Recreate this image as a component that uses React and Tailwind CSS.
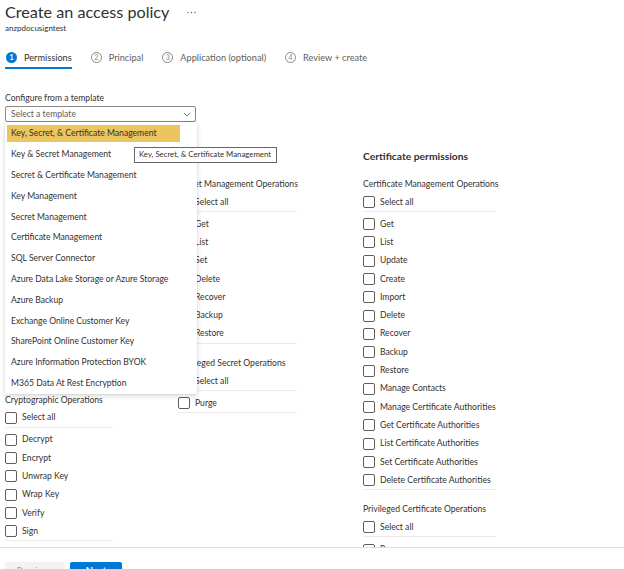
import React from "react";

const keyMgmt = ["Get", "List", "Update", "Create", "Import", "Delete", "Recover", "Backup", "Restore"];
const cryptoOps = ["Decrypt", "Encrypt", "Unwrap Key", "Wrap Key", "Verify", "Sign"];
const privKey = ["Purge", "Release"];
const secretMgmt = ["Get", "List", "Set", "Delete", "Recover", "Backup", "Restore"];
const privSecret = ["Purge"];
const certMgmt = [
  "Get", "List", "Update", "Create", "Import", "Delete", "Recover", "Backup", "Restore",
  "Manage Contacts", "Manage Certificate Authorities", "Get Certificate Authorities",
  "List Certificate Authorities", "Set Certificate Authorities", "Delete Certificate Authorities",
];
const privCert = ["Purge"];

const templates = [
  "Key, Secret, & Certificate Management",
  "Key & Secret Management",
  "Secret & Certificate Management",
  "Key Management",
  "Secret Management",
  "Certificate Management",
  "SQL Server Connector",
  "Azure Data Lake Storage or Azure Storage",
  "Azure Backup",
  "Exchange Online Customer Key",
  "SharePoint Online Customer Key",
  "Azure Information Protection BYOK",
  "M365 Data At Rest Encryption",
];

function Box() {
  return <span className="w-[12px] h-[12px] shrink-0 rounded-[2px] border border-[#605e5c] bg-white" />;
}

function Row({ label, sel }) {
  return (
    <div className={(sel ? "h-[18px]" : "h-[18.3px]") + " flex items-center gap-[5px] whitespace-nowrap"}>
      <Box />
      <span>{label}</span>
    </div>
  );
}

function Section({ label, items, first }) {
  return (
    <div className={first ? "mt-[15px]" : "mt-[13px]"}>
      <div className="h-[12px] leading-[12px] whitespace-nowrap">{label}</div>
      <div className="mt-[3px] border-b border-[#edebe9]">
        <Row label="Select all" sel />
      </div>
      <div className="pt-[3px] border-b border-[#edebe9]">
        {items.map((it) => (
          <Row key={it} label={it} />
        ))}
      </div>
    </div>
  );
}

function Column({ title, width, sections, className }) {
  return (
    <div className={width + " shrink-0 " + (className || "")}>
      <div className="h-[14px] leading-[14px] text-[10.3px] font-bold whitespace-nowrap">{title}</div>
      {sections.map((s, i) => (
        <Section key={s.label} label={s.label} items={s.items} first={i === 0} />
      ))}
    </div>
  );
}

function Step({ n, label, active }) {
  return (
    <div
      className={
        "flex items-center gap-[7px] h-[21px] pl-[1px] " +
        (active ? "border-b-2 border-[#0078d4]" : "border-b-2 border-transparent")
      }
    >
      <span
        className={
          "w-[11px] h-[11px] rounded-full flex items-center justify-center text-[7px] leading-none " +
          (active ? "bg-[#0078d4] text-white font-bold" : "border border-[#8a8886] text-[#8a8886]")
        }
      >
        {n}
      </span>
      <span className={"text-[9.2px] " + (active ? "text-[#323130]" : "text-[#605e5c]")}>{label}</span>
    </div>
  );
}

export default function App() {
  return (
    <div className="w-full h-[569px] overflow-hidden flex flex-col bg-white text-[#323130] text-[8.6px] font-[family-name:Lato,'Open_Sans',sans-serif]">
      <div className="relative flex-1 overflow-hidden px-[5px]">
        <div className="mt-[2px] h-[20px] flex items-center gap-[18px]">
          <span className="text-[16.2px] leading-[20px] font-normal text-[#323130] whitespace-nowrap">
            Create an access policy
          </span>
          <svg width="9" height="3" viewBox="0 0 9 3" className="mt-[1px]">
            <circle cx="1" cy="1.5" r="0.7" fill="#605e5c" />
            <circle cx="4.5" cy="1.5" r="0.7" fill="#605e5c" />
            <circle cx="8" cy="1.5" r="0.7" fill="#605e5c" />
          </svg>
        </div>
        <div className="h-[12px] leading-[12px] text-[8px] text-[#323130]">anzpdocusigntest</div>

        <div className="mt-[14px] flex items-start gap-[18px]">
          <Step n="1" label="Permissions" active />
          <Step n="2" label="Principal" />
          <Step n="3" label="Application (optional)" />
          <Step n="4" label="Review + create" />
        </div>

        <div className="mt-[23px] h-[12px] leading-[12px]">Configure from a template</div>
        <div className="relative mt-[2px] w-[191px]">
          <div className="h-[16px] border border-[#8a8886] rounded-[2px] flex items-center justify-between pl-[5px] pr-[4px]">
            <span className="text-[#605e5c]">Select a template</span>
            <svg width="8" height="5" viewBox="0 0 8 5">
              <path d="M0.8 0.8 L4 4 L7.2 0.8" fill="none" stroke="#605e5c" strokeWidth="0.8" />
            </svg>
          </div>
          <div className="absolute z-10 top-full left-0 w-[192px] bg-white pt-[1.5px] shadow-[0_2px_5px_rgba(0,0,0,0.16),0_0_1px_rgba(0,0,0,0.12)]">
            {templates.map((t, i) => (
              <div key={t} className="h-[20.8px] flex items-center whitespace-nowrap">
                {i === 0 ? (
                  <div className="ml-[2px] w-[173px] h-[17px] bg-[#ebc55f] flex items-center pl-[4px]">{t}</div>
                ) : (
                  <div className="pl-[6px]">{t}</div>
                )}
              </div>
            ))}
          </div>
        </div>

        <div className="mt-[27px] flex">
          <Column
            title="Key permissions"
            width="w-[108px]"
            sections={[
              { label: "Key Management Operations", items: keyMgmt },
              { label: "Cryptographic Operations", items: cryptoOps },
              { label: "Privileged Key Operations", items: privKey },
            ]}
          />
          <Column
            title="Secret permissions"
            width="w-[119px]"
            className="ml-[65px]"
            sections={[
              { label: "Secret Management Operations", items: secretMgmt },
              { label: "Privileged Secret Operations", items: privSecret },
            ]}
          />
          <Column
            title="Certificate permissions"
            width="w-[133px]"
            className="ml-[66px]"
            sections={[
              { label: "Certificate Management Operations", items: certMgmt },
              { label: "Privileged Certificate Operations", items: privCert },
            ]}
          />
        </div>

        <div className="absolute z-20 left-[134px] top-[147px] w-[143px] h-[16px] bg-white border border-[#666666] flex items-center pl-[4px] text-[7.8px] whitespace-nowrap">
          Key, Secret, &amp; Certificate Management
        </div>
      </div>
      <div className="h-[22px] shrink-0 border-t border-[#e1dfdd] px-[5px] pt-[14px] flex items-start gap-[6px] overflow-hidden">
        <div className="w-[59px] h-[22px] shrink-0 rounded-[2px] bg-[#f3f2f1] text-[#a19f9d] pt-[3px] leading-[12px] text-center text-[9.5px]">
          Previous
        </div>
        <div className="w-[52px] h-[22px] shrink-0 rounded-[2px] bg-[#0078d4] text-white font-bold pt-[3px] leading-[12px] text-center text-[9.5px]">
          Next
        </div>
      </div>
    </div>
  );
}
